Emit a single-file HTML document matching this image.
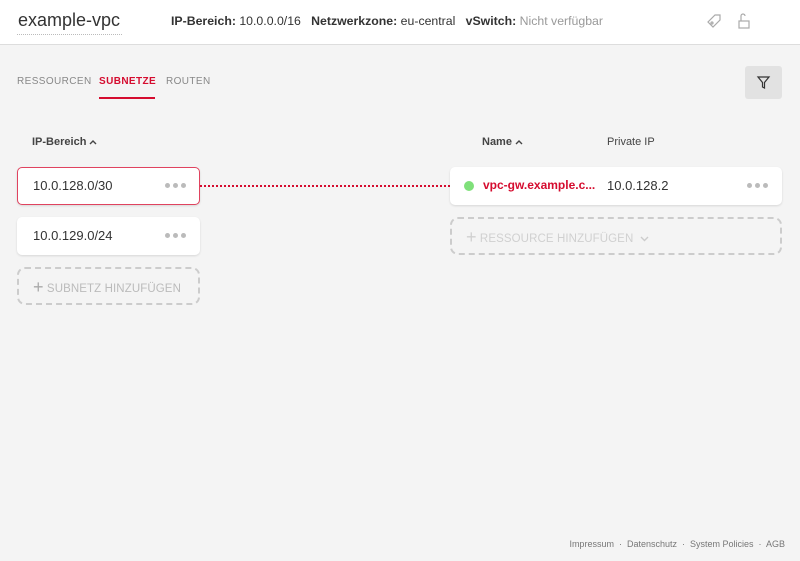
<!DOCTYPE html>
<html><head><meta charset="utf-8"><style>
*{box-sizing:border-box;margin:0;padding:0}
body{width:800px;height:561px;background:#f4f4f4;font-family:"Liberation Sans",sans-serif;color:#333;position:relative;overflow:hidden}
.hdr{position:absolute;left:0;top:0;width:800px;height:45px;background:#fff;border-bottom:1px solid #ddd}
.abs{position:absolute;white-space:nowrap}
.card{position:absolute;background:#fff;border-radius:5px;box-shadow:0 1px 2px rgba(0,0,0,.12)}
.dots{position:absolute;right:14px;top:16px;display:flex;gap:3px}
.dots i{display:block;width:5px;height:5px;border-radius:50%;background:#bbb}
.add{position:absolute;border:2px dashed #ccc;border-radius:8px;color:#bbb;font-size:11.5px;letter-spacing:.1px}
.car{display:inline-block;vertical-align:middle;margin-left:3px}
</style></head><body>
<div class="hdr">
 <div class="abs" style="left:18px;top:10px;font-size:18px;color:#333">example-vpc</div>
 <div class="abs" style="left:17px;top:34px;width:105px;border-top:1px dotted #bbb"></div>
 <div class="abs" style="left:171px;top:14px;font-size:12.3px;color:#333"><b style="font-weight:600">IP-Bereich:</b> 10.0.0.0/16&nbsp;&nbsp;&nbsp;<b style="font-weight:600">Netzwerkzone:</b> eu-central&nbsp;&nbsp;&nbsp;<b style="font-weight:600">vSwitch:</b> <span style="color:#999">Nicht verfügbar</span></div>
 <svg class="abs" style="left:706px;top:13px" width="17" height="17" viewBox="0 0 17 17" fill="none" stroke="#aaa" stroke-width="1.2"><path d="M9 2h5v5l-7 7-5-5z"/><circle cx="6" cy="10" r="1"/></svg>
 <svg class="abs" style="left:737px;top:12px" width="14" height="18" viewBox="0 0 14 18" fill="none" stroke="#aaa" stroke-width="1.2"><path d="M4 9V4a2 2 0 0 1 4 0"/><rect x="2" y="9" width="10" height="7"/></svg>
</div>
<div class="abs" style="left:17px;top:76px;font-size:10px;letter-spacing:.4px;color:#888">RESSOURCEN</div>
<div class="abs" style="left:99px;top:76px;font-size:10px;letter-spacing:.4px;color:#d50c2f;font-weight:600">SUBNETZE</div>
<div class="abs" style="left:99px;top:97px;width:56px;height:2px;background:#d50c2f"></div>
<div class="abs" style="left:166px;top:76px;font-size:10px;letter-spacing:.4px;color:#888">ROUTEN</div>
<div class="abs" style="left:745px;top:66px;width:37px;height:33px;background:#e2e2e2;border-radius:3px"></div>
<svg class="abs" style="left:756px;top:75px" width="15" height="15" viewBox="0 0 15 15" fill="none" stroke="#333" stroke-width="1.2"><path d="M2 2h11L8.5 7.5V13L6.5 12V7.5z"/></svg>
<div class="abs" style="left:32px;top:136px;font-size:11px;font-weight:600;color:#444">IP-Bereich<svg class="car" width="8" height="6" viewBox="0 0 8 6"><path d="M1 5l3-3 3 3" fill="none" stroke="#444" stroke-width="1.4"/></svg></div>
<div class="abs" style="left:482px;top:136px;font-size:11px;font-weight:600;color:#444">Name<svg class="car" width="8" height="6" viewBox="0 0 8 6"><path d="M1 5l3-3 3 3" fill="none" stroke="#444" stroke-width="1.4"/></svg></div>
<div class="abs" style="left:607px;top:136px;font-size:11px;color:#444">Private IP</div>
<div class="card" style="left:17px;top:167px;width:183px;height:38px;border:1px solid #e0435f"><div class="abs" style="left:15px;top:10px;font-size:13px;color:#333">10.0.128.0/30</div><div class="dots" style="right:13px;top:15px"><i></i><i></i><i></i></div></div>
<div class="card" style="left:17px;top:217px;width:183px;height:38px"><div class="abs" style="left:16px;top:11px;font-size:13px;color:#333">10.0.129.0/24</div><div class="dots"><i></i><i></i><i></i></div></div>
<div class="add" style="left:17px;top:267px;width:183px;height:38px"><div class="abs" style="left:14px;top:7px"><span style="font-size:18px;position:relative;top:1px;color:#aaa">+</span> SUBNETZ HINZUFÜGEN</div></div>
<div class="abs" style="left:200px;top:185px;width:250px;height:2px;background:repeating-linear-gradient(90deg,#d50c2f 0 2px,transparent 2px 4px)"></div>
<div class="card" style="left:450px;top:167px;width:332px;height:38px"><div class="abs" style="left:14px;top:14px;width:10px;height:10px;border-radius:50%;background:#7fe07a"></div><div class="abs" style="left:33px;top:11px;font-size:12px;font-weight:600;color:#d50c2f">vpc-gw.example.c...</div><div class="abs" style="left:157px;top:11px;font-size:13px;color:#333">10.0.128.2</div><div class="dots"><i></i><i></i><i></i></div></div>
<div class="add" style="left:450px;top:217px;width:332px;height:38px;color:#d0d0d0"><div class="abs" style="left:14px;top:7px"><span style="font-size:18px;position:relative;top:1px">+</span> RESSOURCE HINZUFÜGEN <svg class="car" width="9" height="6" viewBox="0 0 9 6"><path d="M1 1l3.5 3.5L8 1" fill="none" stroke="#ccc" stroke-width="1.4"/></svg></div></div>
<div class="abs" style="right:15px;top:539px;font-size:9px;color:#777">Impressum &nbsp;·&nbsp; Datenschutz &nbsp;·&nbsp; System Policies &nbsp;·&nbsp; AGB</div>
</body></html>
